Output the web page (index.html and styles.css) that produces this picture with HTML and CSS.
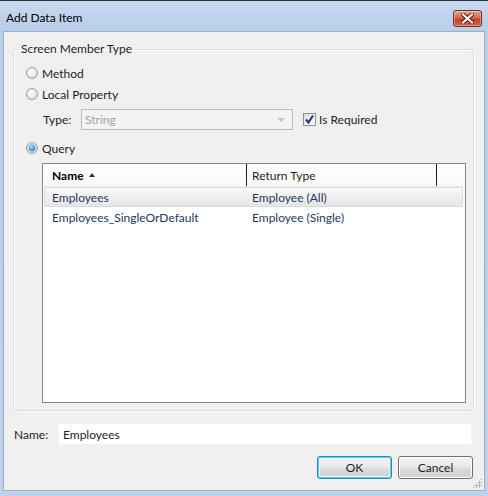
FILE: index.html
```html
<!DOCTYPE html>
<html lang="en">
<head>
    <meta charset="UTF-8">
    <title>Add Data Item</title>
    <link rel="stylesheet" href="styles.css">
</head>
<body>
    <div class="window">
        <div class="titlebar">
            <span class="title">Add Data Item</span>
            <button class="close-btn" title="Close">
                <svg width="13" height="11" viewBox="0 0 13 11">
                    <path d="M2 1.5 L11 9.5 M11 1.5 L2 9.5" stroke="#5a1a10" stroke-width="4" stroke-linecap="square"/>
                    <path d="M2 1.5 L11 9.5 M11 1.5 L2 9.5" stroke="#fff" stroke-width="2.2" stroke-linecap="square"/>
                </svg>
            </button>
        </div>

        <div class="client">
            <!-- Member type selection -->
            <fieldset class="group">
                <legend>Screen Member Type</legend>

                <label class="option"><span class="radio"></span>Method</label>
                <label class="option option-gap1"><span class="radio"></span>Local Property</label>

                <div class="type-row">
                    <span class="type-label">Type:</span>
                    <div class="combo disabled">
                        <span>String</span>
                        <span class="combo-arrow"></span>
                    </div>
                    <label class="check-option">
                        <span class="checkbox">
                            <svg width="11" height="11" viewBox="0 0 11 11">
                                <path d="M2 5.5 L4.5 8.5 L9 1.5" fill="none" stroke="#22347a" stroke-width="2"/>
                            </svg>
                        </span>
                        Is Required
                    </label>
                </div>

                <label class="option option-gap2"><span class="radio checked"></span>Query</label>

                <!-- Queries list -->
                <div class="grid">
                    <div class="grid-header">
                        <div class="head-cell head-name">Name
                            <svg class="sort" width="6" height="4" viewBox="0 0 6 4"><path d="M0 4 L3 0 L6 4 Z" fill="#333"/></svg>
                        </div>
                        <div class="head-cell head-type">Return Type</div>
                        <div class="head-cell head-fill"></div>
                    </div>
                    <div class="grid-row selected">
                        <div class="cell cell-name">Employees</div>
                        <div class="cell cell-type">Employee (All)</div>
                    </div>
                    <div class="grid-row">
                        <div class="cell cell-name">Employees_SingleOrDefault</div>
                        <div class="cell cell-type">Employee (Single)</div>
                    </div>
                </div>
            </fieldset>

            <div class="name-row">
                <span class="name-label">Name:</span>
                <div class="textbox">Employees</div>
            </div>

            <div class="buttons">
                <button class="btn default">OK</button>
                <button class="btn">Cancel</button>
            </div>

            <div class="grip"></div>
        </div>
    </div>
</body>
</html>
```

FILE: styles.css
```css
* {
    box-sizing: border-box;
}
body {
    margin: 0;
    font-family: Lato, "Open Sans", sans-serif;
    font-size: 12px;
    color: #1e1e1e;
}
.window {
    width: 488px;
    height: 496px;
    border-top: 1px solid #2f343b;
    background: linear-gradient(#c6d9ef, #b7cee9 30px, #bdd3ec);
    display: flex;
    flex-direction: column;
}
.titlebar {
    height: 30px;
    display: flex;
    justify-content: space-between;
    align-items: flex-start;
    padding: 9px 6px 0 6px;
}
.title {
    line-height: 16px;
    color: #000;
}
.close-btn {
    width: 29px;
    height: 17px;
    padding: 0;
    border: 1px solid #7a2b1e;
    border-radius: 3px;
    background: linear-gradient(#e8a493, #d26a52 45%, #c2432b 55%, #d3654a);
    box-shadow: inset 0 0 0 1px rgba(255, 255, 255, 0.35);
    display: flex;
    align-items: center;
    justify-content: center;
}
.client {
    position: relative;
    height: 460px;
    margin: 0 3px 5px;
    background-color: #f0f0f0;
    border: 1px solid #9eafc4;
}

/* group box */
.group {
    margin: 9px 10px 0 9px;
    padding: 6px 7px 7px 12px;
    border: 1px solid #d5dfe5;
    border-radius: 3px;
    box-shadow: inset 1px 1px 0 #fff, 1px 1px 0 #fff;
}
.group legend {
    margin-left: -7px;
    padding: 0 2px;
    line-height: 16px;
}
.option {
    display: flex;
    align-items: center;
    gap: 4px;
    height: 20px;
}
.option-gap1 {
    margin-top: 1px;
}
.option-gap2 {
    margin-top: 8px;
}
.radio {
    width: 12px;
    height: 12px;
    border-radius: 50%;
    border: 1px solid #9a9b9c;
    background: radial-gradient(circle at 40% 35%, #fff, #e6e6e6 60%, #d2d2d2);
    display: flex;
    align-items: center;
    justify-content: center;
}
.radio.checked::after {
    content: "";
    width: 6px;
    height: 6px;
    border-radius: 50%;
    background: radial-gradient(circle at 40% 35%, #b7e3fb, #3a8cc4 60%, #1b5a8a);
    box-shadow: 0 0 1px 1px #8cc8ec;
}
.type-row {
    display: flex;
    align-items: center;
    height: 21px;
    margin-top: 5px;
    padding-left: 17px;
}
.type-label {
    width: 38px;
}
.combo {
    width: 212px;
    height: 21px;
    display: flex;
    align-items: center;
    justify-content: space-between;
    padding: 0 7px 0 3px;
    border: 1px solid #b8bbbd;
    background-color: #f4f4f4;
}
.combo.disabled {
    color: #a2a2a2;
}
.combo-arrow {
    width: 0;
    height: 0;
    border-left: 4px solid transparent;
    border-right: 4px solid transparent;
    border-top: 4px solid #c6c6c6;
}
.check-option {
    display: flex;
    align-items: center;
    gap: 3px;
    margin-left: 10px;
}
.checkbox {
    width: 13px;
    height: 13px;
    border: 1px solid #8e8f8f;
    background: linear-gradient(135deg, #dcdcdc, #fff);
    display: flex;
    align-items: center;
    justify-content: center;
}

/* list of queries */
.grid {
    height: 240px;
    margin: 5px 0 0 16px;
    border: 1px solid #828790;
    background-color: #fff;
}
.grid-header {
    display: grid;
    grid-template-columns: 204px 190px 1fr;
    height: 23px;
    background: linear-gradient(#fff, #f7f8f9);
    border-bottom: 1px solid #eceef0;
}
.head-cell {
    display: flex;
    align-items: center;
    border-right: 1px solid #1c1c1c;
    color: #1e1e1e;
}
.head-name {
    padding-left: 9px;
    font-weight: bold;
    color: #000;
}
.head-type {
    padding-left: 5px;
}
.head-fill {
    border-right: none;
}
.sort {
    margin-left: 5px;
}
.grid-row {
    display: grid;
    grid-template-columns: 202px 1fr;
    height: 20px;
    margin: 0 2px 0 1px;
    align-items: center;
    color: #1f3864;
    border: 1px solid transparent;
}
.grid-row.selected {
    border-color: #d9d9d9;
    border-radius: 2px;
    background: linear-gradient(#f9f9f9, #e6e6e6);
}
.cell-name {
    padding-left: 7px;
}
.cell-type {
    padding-left: 5px;
}

/* name field */
.name-row {
    display: flex;
    align-items: center;
    margin: 12px 12px 0 10px;
}
.name-label {
    width: 44px;
}
.textbox {
    flex: 1;
    height: 22px;
    line-height: 22px;
    padding-left: 4px;
    background-color: #fff;
    border: 1px solid #f4f4f4;
}
.buttons {
    display: flex;
    justify-content: flex-end;
    gap: 6px;
    margin: 11px 11px 0 0;
}
.btn {
    width: 75px;
    height: 23px;
    padding: 0;
    font-family: inherit;
    font-size: 12px;
    color: #1e1e1e;
    border: 1px solid #707070;
    border-radius: 3px;
    background: linear-gradient(#f2f2f2, #ebebeb 48%, #dddddd 52%, #cfcfcf);
    box-shadow: inset 0 0 0 1px #fcfcfc;
}
.btn.default {
    border-color: #3c7fb1;
    box-shadow: inset 0 0 0 1px #48d4f6, inset 0 0 0 2px #e6f6fd;
}
.grip {
    position: absolute;
    right: 2px;
    bottom: 2px;
    width: 10px;
    height: 10px;
    background-image: radial-gradient(circle, #b9b9b9 1px, transparent 1.2px);
    background-size: 3px 3px;
    clip-path: polygon(100% 0, 100% 100%, 0 100%);
}
```
